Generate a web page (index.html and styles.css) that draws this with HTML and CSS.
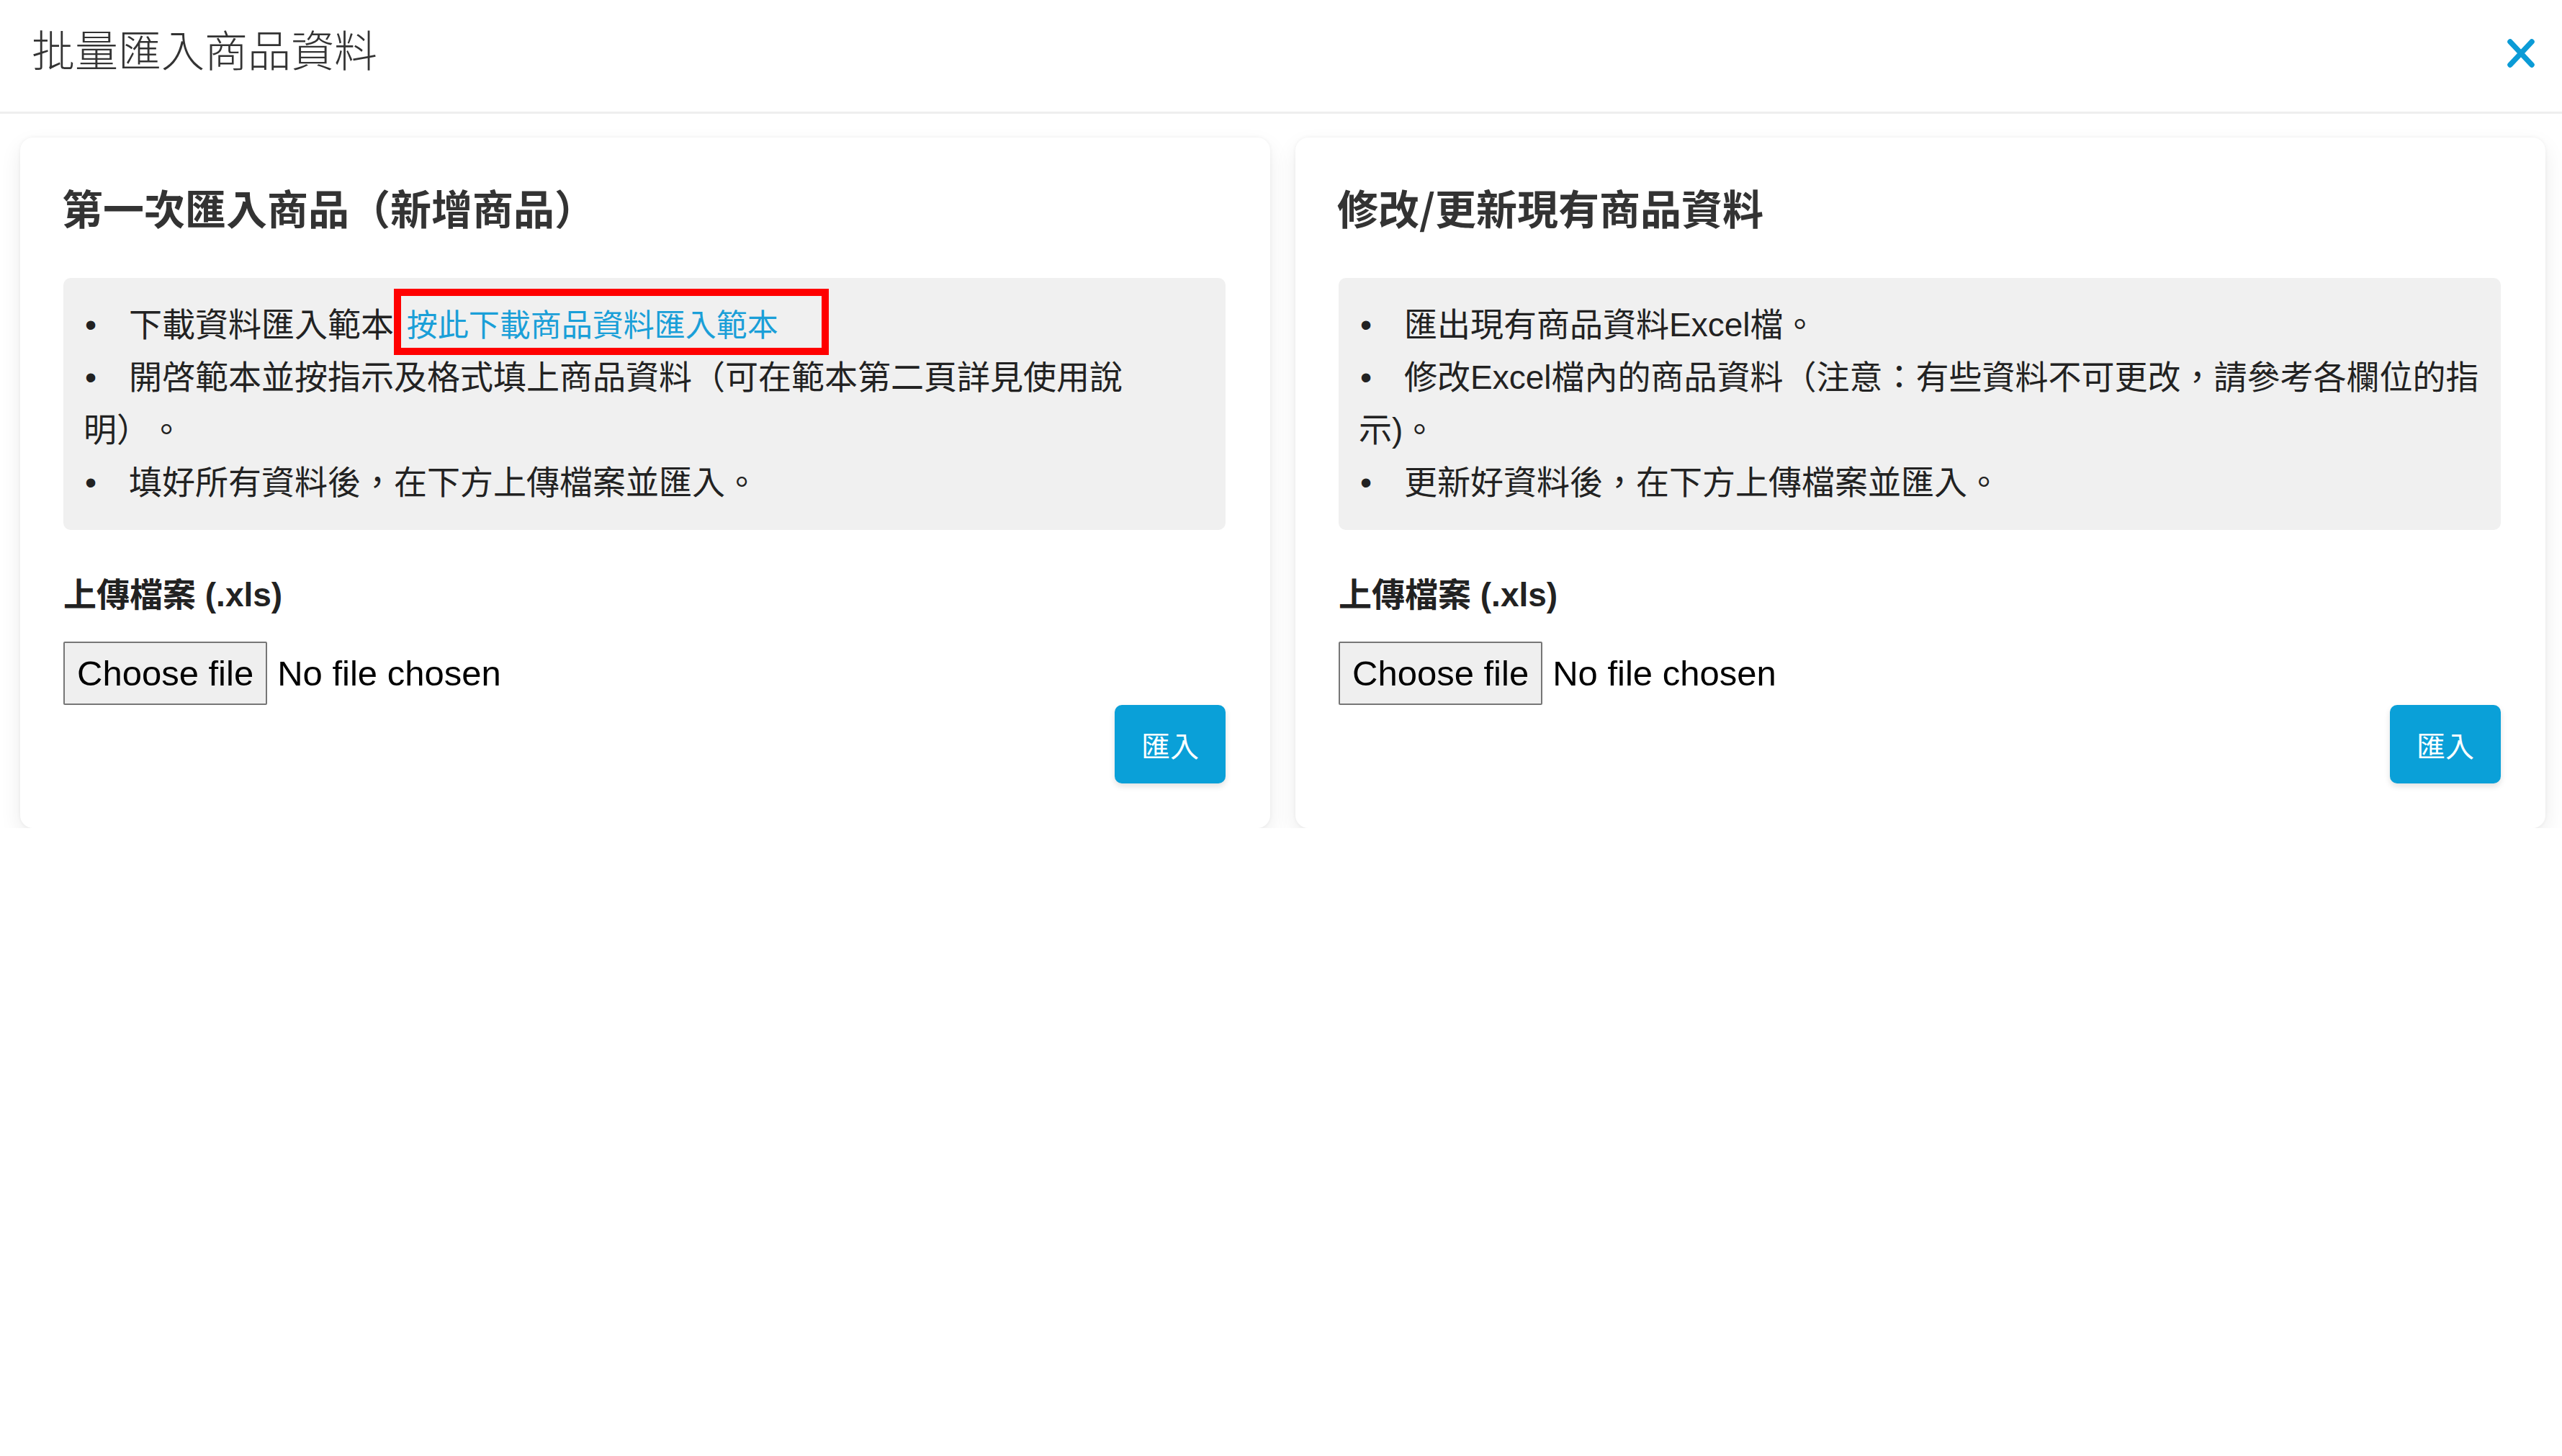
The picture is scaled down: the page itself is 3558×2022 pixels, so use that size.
FILE: index.html
```html
<!DOCTYPE html>
<html lang="zh-Hant">
<head>
<meta charset="utf-8">
<title>批量匯入商品資料</title>
<link rel="stylesheet" href="styles.css">
</head>
<body>
<div class="modal">
  <header class="modal-header">
    <h1 class="modal-title">批量匯入商品資料</h1>
    <button class="close-btn" type="button" aria-label="關閉">
      <svg viewBox="0 0 40 42" width="40" height="42"><path d="M5 5 L35 37 M35 5 L5 37" fill="none" stroke="#0b9bd6" stroke-width="7.5" stroke-linecap="round"/></svg>
    </button>
  </header>
  <main class="cards">
    <section class="card">
      <h2 class="card-title">第一次匯入商品（新增商品）</h2>
      <ul class="steps">
        <li>下載資料匯入範本:<span class="annot"><a class="link" href="#">按此下載商品資料匯入範本</a></span></li>
        <li>開啓範本並按指示及格式填上商品資料（可在範本第二頁詳見使用說明）。</li>
        <li>填好所有資料後，在下方上傳檔案並匯入。</li>
      </ul>
      <span class="upload-label">上傳檔案 (.xls)</span>
      <label class="file-picker">
        <input class="file-native" type="file" accept=".xls">
        <span class="file-btn">Choose file</span>
        <span class="file-name">No file chosen</span>
      </label>
      <div class="actions"><button class="import-btn" type="button">匯入</button></div>
    </section>
    <section class="card">
      <h2 class="card-title">修改/更新現有商品資料</h2>
      <ul class="steps">
        <li>匯出現有商品資料Excel檔。</li>
        <li>修改Excel檔內的商品資料（注意：有些資料不可更改，請參考各欄位的指示)。</li>
        <li>更新好資料後，在下方上傳檔案並匯入。</li>
      </ul>
      <span class="upload-label">上傳檔案 (.xls)</span>
      <label class="file-picker">
        <input class="file-native" type="file" accept=".xls">
        <span class="file-btn">Choose file</span>
        <span class="file-name">No file chosen</span>
      </label>
      <div class="actions"><button class="import-btn" type="button">匯入</button></div>
    </section>
  </main>
</div>
</body>
</html>
```
FILE: styles.css
```css
html, body {
  margin: 0;
  padding: 0;
  background: #ffffff;
}
body {
  font-family: "Liberation Sans", "Noto Sans CJK TC", sans-serif;
  color: #222222;
  text-spacing-trim: space-all;
}
.modal-header {
  display: flex;
  justify-content: space-between;
  align-items: flex-start;
  box-sizing: border-box;
  height: 158px;
  padding: 22px 37px 0 44px;
  border-bottom: 3px solid #eeeeee;
}
.modal-title {
  margin: 0;
  font-family: "Noto Sans CJK TC", sans-serif;
  font-size: 60px;
  line-height: 90px;
  font-weight: 300;
  color: #333333;
}
.close-btn {
  margin-top: 31px;
  padding: 0;
  width: 40px;
  height: 42px;
  border: none;
  background: transparent;
  display: flex;
}
.cards {
  display: grid;
  grid-template-columns: 1fr 1fr;
  align-items: start;
  gap: 35px;
  padding: 33px 23px 0 28px;
}
.card {
  background: #ffffff;
  border-radius: 18px;
  padding: 62px 62px 62px 60px;
  box-shadow: 0 12px 30px rgba(0, 0, 0, 0.08), 0 0 5px rgba(0, 0, 0, 0.06);
  display: flex;
  flex-direction: column;
}
.card-title {
  margin: 0 0 65px -2px;
  font-family: "Noto Sans CJK TC", sans-serif;
  font-size: 57px;
  line-height: 68px;
  font-weight: 700;
  color: #333333;
}
.steps {
  list-style: none;
  margin: 0;
  padding: 29px 22px 29px 28px;
  background: #f0f0f0;
  border-radius: 10px;
  font-size: 46px;
  line-height: 73px;
  color: #222222;
}
.steps li::before {
  content: "•";
  display: inline-block;
  width: 63px;
  padding-left: 2px;
  box-sizing: border-box;
}
.annot {
  position: relative;
  display: inline-block;
  line-height: 71px;
  padding-left: 5px;
}
.annot::after {
  content: "";
  position: absolute;
  left: -13px;
  right: -70px;
  top: -15px;
  bottom: -5px;
  border: 10px solid #ff0000;
}
.link {
  font-size: 43px;
  color: #1a9fd8;
  text-decoration: none;
}
.upload-label {
  display: block;
  margin-top: 60px;
  font-size: 46px;
  line-height: 60px;
  font-weight: 700;
  color: #222222;
}
.file-picker {
  display: flex;
  align-items: center;
  margin-top: 35px;
  font-family: "Liberation Sans", sans-serif;
  font-size: 49px;
  color: #000000;
}
.file-native {
  display: none;
}
.file-btn {
  box-sizing: border-box;
  height: 88px;
  display: flex;
  align-items: center;
  padding: 0 17px;
  margin-right: 14px;
  border: 2px solid #767676;
  border-radius: 2px;
  background: #efefef;
}
.actions {
  display: flex;
  justify-content: flex-end;
}
.import-btn {
  height: 109px;
  padding: 0 37px;
  border: none;
  border-radius: 10px;
  background: #0aa0d8;
  color: #ffffff;
  font-family: "Noto Sans CJK TC", sans-serif;
  font-size: 40px;
  box-shadow: 0 4px 8px rgba(0, 0, 0, 0.12);
}
```
